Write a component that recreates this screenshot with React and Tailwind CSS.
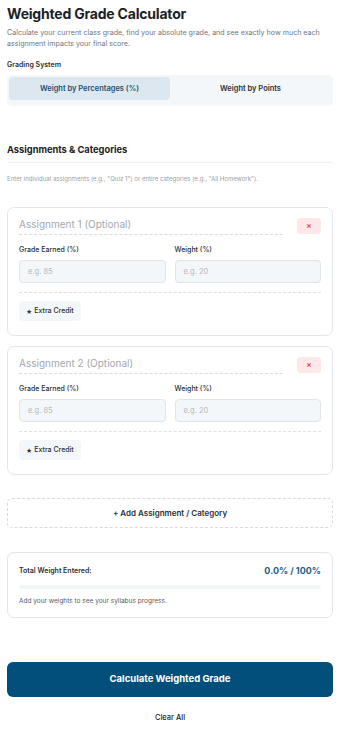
import React from 'react';

function AssignmentCard({ n }) {
  return (
    <div className="rounded-[7px] border border-[#e3e6ea] px-[11px] pt-[10px] pb-[14px]">
      <div className="flex items-start gap-2">
        <div className="flex-1 border-b border-dashed border-[#d9dde2] pb-[4px] mr-[6px] text-[10px] leading-[12px] text-[#a3a8ae]">
          Assignment {n} (Optional)
        </div>
        <button className="w-[24px] h-[16px] rounded-[4px] bg-[#fde7e8] text-[#e0525b] text-[8px] leading-none flex items-center justify-center font-bold">
          ×
        </button>
      </div>
      <div className="grid grid-cols-2 gap-[9px] mt-[10px]">
        {[
          ['Grade Earned (%)', 'e.g. 85'],
          ['Weight (%)', 'e.g. 20'],
        ].map(([label, ph]) => (
          <div key={label}>
            <div className="text-[7px] leading-[9px] font-medium text-[#2a2f36]">{label}</div>
            <div className="mt-[6px] h-[23px] rounded-[4px] border border-[#dfe5ea] bg-[#f4f7f9] px-[8px] flex items-center text-[7.5px] text-[#b3b8be]">
              {ph}
            </div>
          </div>
        ))}
      </div>
      <div className="mt-[9px] border-t border-dashed border-[#dde1e5]" />
      <button className="mt-[8px] h-[20px] px-[7px] rounded-[4px] bg-[#f4f7f9] text-[7px] font-medium text-[#2a2f36] flex items-center gap-[2px]">
        <span className="text-[6px]">★</span> Extra Credit
      </button>
    </div>
  );
}

export default function App() {
  return (
    <div className="min-h-screen bg-white px-[7px] pt-[3px] pb-4 font-['Inter',sans-serif] text-[#1c2128]">
      <h1 className="text-[14px] font-bold tracking-[-0.2px] leading-[20px] mt-[1px]">Weighted Grade Calculator</h1>
      <p className="mt-[3px] text-[7.1px] leading-[11px] text-[#70767d]">
        Calculate your current class grade, find your absolute grade, and see exactly how much each assignment impacts your final score.
      </p>

      <div className="mt-[11px] text-[7px] leading-[10px] font-semibold text-[#2a2f36]">Grading System</div>
      <div className="mt-[5px] h-[31px] rounded-[5px] bg-[#f3f7f9] p-[2px] grid grid-cols-2">
        <div className="rounded-[4px] bg-[#dce7ef] h-[23px] flex items-center justify-center text-[7.5px] font-semibold text-[#24506f]">
          Weight by Percentages (%)
        </div>
        <div className="h-[23px] flex items-center justify-center text-[7.5px] font-semibold text-[#2a2f36]">
          Weight by Points
        </div>
      </div>

      <h2 className="mt-[37px] text-[9.3px] font-bold text-[#1c2128] leading-[14px]">Assignments &amp; Categories</h2>
      <div className="mt-[5px] border-t border-[#eef0f2]" />
      <p className="mt-[11px] text-[6.1px] leading-[9px] text-[#9aa0a6]">
        Enter individual assignments (e.g., "Quiz 1") or entire categories (e.g., "All Homework").
      </p>

      <div className="mt-[24px] flex flex-col gap-[10px]">
        <AssignmentCard n={1} />
        <AssignmentCard n={2} />
      </div>

      <button className="mt-[23px] w-full h-[30px] rounded-[5px] border border-dashed border-[#d7dbe0] text-[8px] font-semibold text-[#2a2f36]">
        + Add Assignment / Category
      </button>

      <div className="mt-[24px] rounded-[7px] border border-[#e3e6ea] px-[11px] pt-[12px] pb-[11px]">
        <div className="flex items-center justify-between h-[12px]">
          <span className="text-[7px] font-semibold text-[#2a2f36]">Total Weight Entered:</span>
          <span className="text-[9px] font-bold text-[#1d5f8a]">0.0% / 100%</span>
        </div>
        <div className="mt-[8px] h-[4px] rounded-full bg-[#f2f5f7]" />
        <p className="mt-[8px] text-[6.5px] leading-[9px] text-[#555b62]">Add your weights to see your syllabus progress.</p>
      </div>

      <button className="mt-[44px] w-full h-[35px] rounded-[6px] bg-[#034f7b] text-white text-[9.5px] font-bold">
        Calculate Weighted Grade
      </button>
      <div className="mt-[16px] text-center text-[7.5px] leading-[10px] font-medium text-[#1c2128]">Clear All</div>
    </div>
  );
}
